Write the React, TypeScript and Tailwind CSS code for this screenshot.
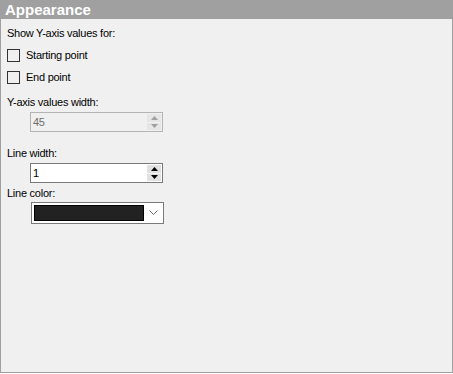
import React from 'react';

const font = { fontFamily: '"Liberation Sans", Arial, sans-serif' };

const Checkbox: React.FC<{ label: string }> = ({ label }) => (
  <div className="flex items-center h-[13px]">
    <div className="w-[13px] h-[13px] border border-[#333333] bg-[#f0f0f0]" />
    <span className="ml-[6px] text-[11px] leading-[13px] text-black">{label}</span>
  </div>
);

const SpinBox: React.FC<{ value: string; disabled?: boolean }> = ({ value, disabled }) => (
  <div
    className={
      'ml-[23px] flex items-stretch w-[133px] h-[20px] border ' +
      (disabled ? 'border-[#b4b4b4] bg-[#f0f0f0]' : 'border-[#7a7a7a] bg-white')
    }
  >
    <div
      className={
        'flex-1 pl-[2px] text-[11px] leading-[18px] ' + (disabled ? 'text-[#6d6d6d]' : 'text-black')
      }
    >
      {value}
    </div>
    <div className="flex flex-col w-[15px] py-[1px] pr-[1px]">
      <div
        className={
          'flex-1 flex items-center justify-center border-b ' +
          (disabled ? 'bg-[#e6e6e6] border-[#f0f0f0]' : 'bg-[#e1e1e1] border-[#f5f5f5]')
        }
      >
        <svg width="7" height="4" viewBox="0 0 7 4">
          <path d="M3.5 0 L7 4 L0 4 Z" fill={disabled ? '#a0a0a0' : '#000000'} />
        </svg>
      </div>
      <div
        className={
          'flex-1 flex items-center justify-center ' + (disabled ? 'bg-[#e6e6e6]' : 'bg-[#e1e1e1]')
        }
      >
        <svg width="7" height="4" viewBox="0 0 7 4">
          <path d="M0 0 L7 0 L3.5 4 Z" fill={disabled ? '#a0a0a0' : '#000000'} />
        </svg>
      </div>
    </div>
  </div>
);

const ColorPicker: React.FC = () => (
  <div className="ml-[24px] flex items-center w-[133px] h-[22px] border border-[#7a7a7a] bg-white p-[2px]">
    <div className="w-[110px] h-[16px] border border-black bg-[#222222]" />
    <div className="flex-1 flex items-center justify-center pl-[2px]">
      <svg width="9" height="6" viewBox="0 0 9 6">
        <path d="M0.5 0.5 L4.5 4.5 L8.5 0.5" fill="none" stroke="#6d6d6d" strokeWidth="1" />
      </svg>
    </div>
  </div>
);

export default function App() {
  return (
    <div className="w-[453px] h-[374px] bg-white" style={font}>
      <div className="h-[373px] border border-[#a0a0a0] bg-[#f0f0f0] flex flex-col">
        <div className="h-[18px] bg-[#a0a0a0] pl-[4px] text-[15px] font-bold leading-[18px] text-white">
          Appearance
        </div>
        <div className="flex flex-col pl-[6px] text-[11px] leading-[13px] tracking-[-0.25px] text-black">
          <div className="mt-[8px]">Show Y-axis values for:</div>
          <div className="mt-[9px]">
            <Checkbox label="Starting point" />
          </div>
          <div className="mt-[9px]">
            <Checkbox label="End point" />
          </div>
          <div className="mt-[12px]">Y-axis values width:</div>
          <div className="mt-[3px]">
            <SpinBox value="45" disabled />
          </div>
          <div className="mt-[15px]">Line width:</div>
          <div className="mt-[3px]">
            <SpinBox value="1" />
          </div>
          <div className="mt-[4px]">Line color:</div>
          <div className="mt-[2px]">
            <ColorPicker />
          </div>
        </div>
      </div>
    </div>
  );
}
